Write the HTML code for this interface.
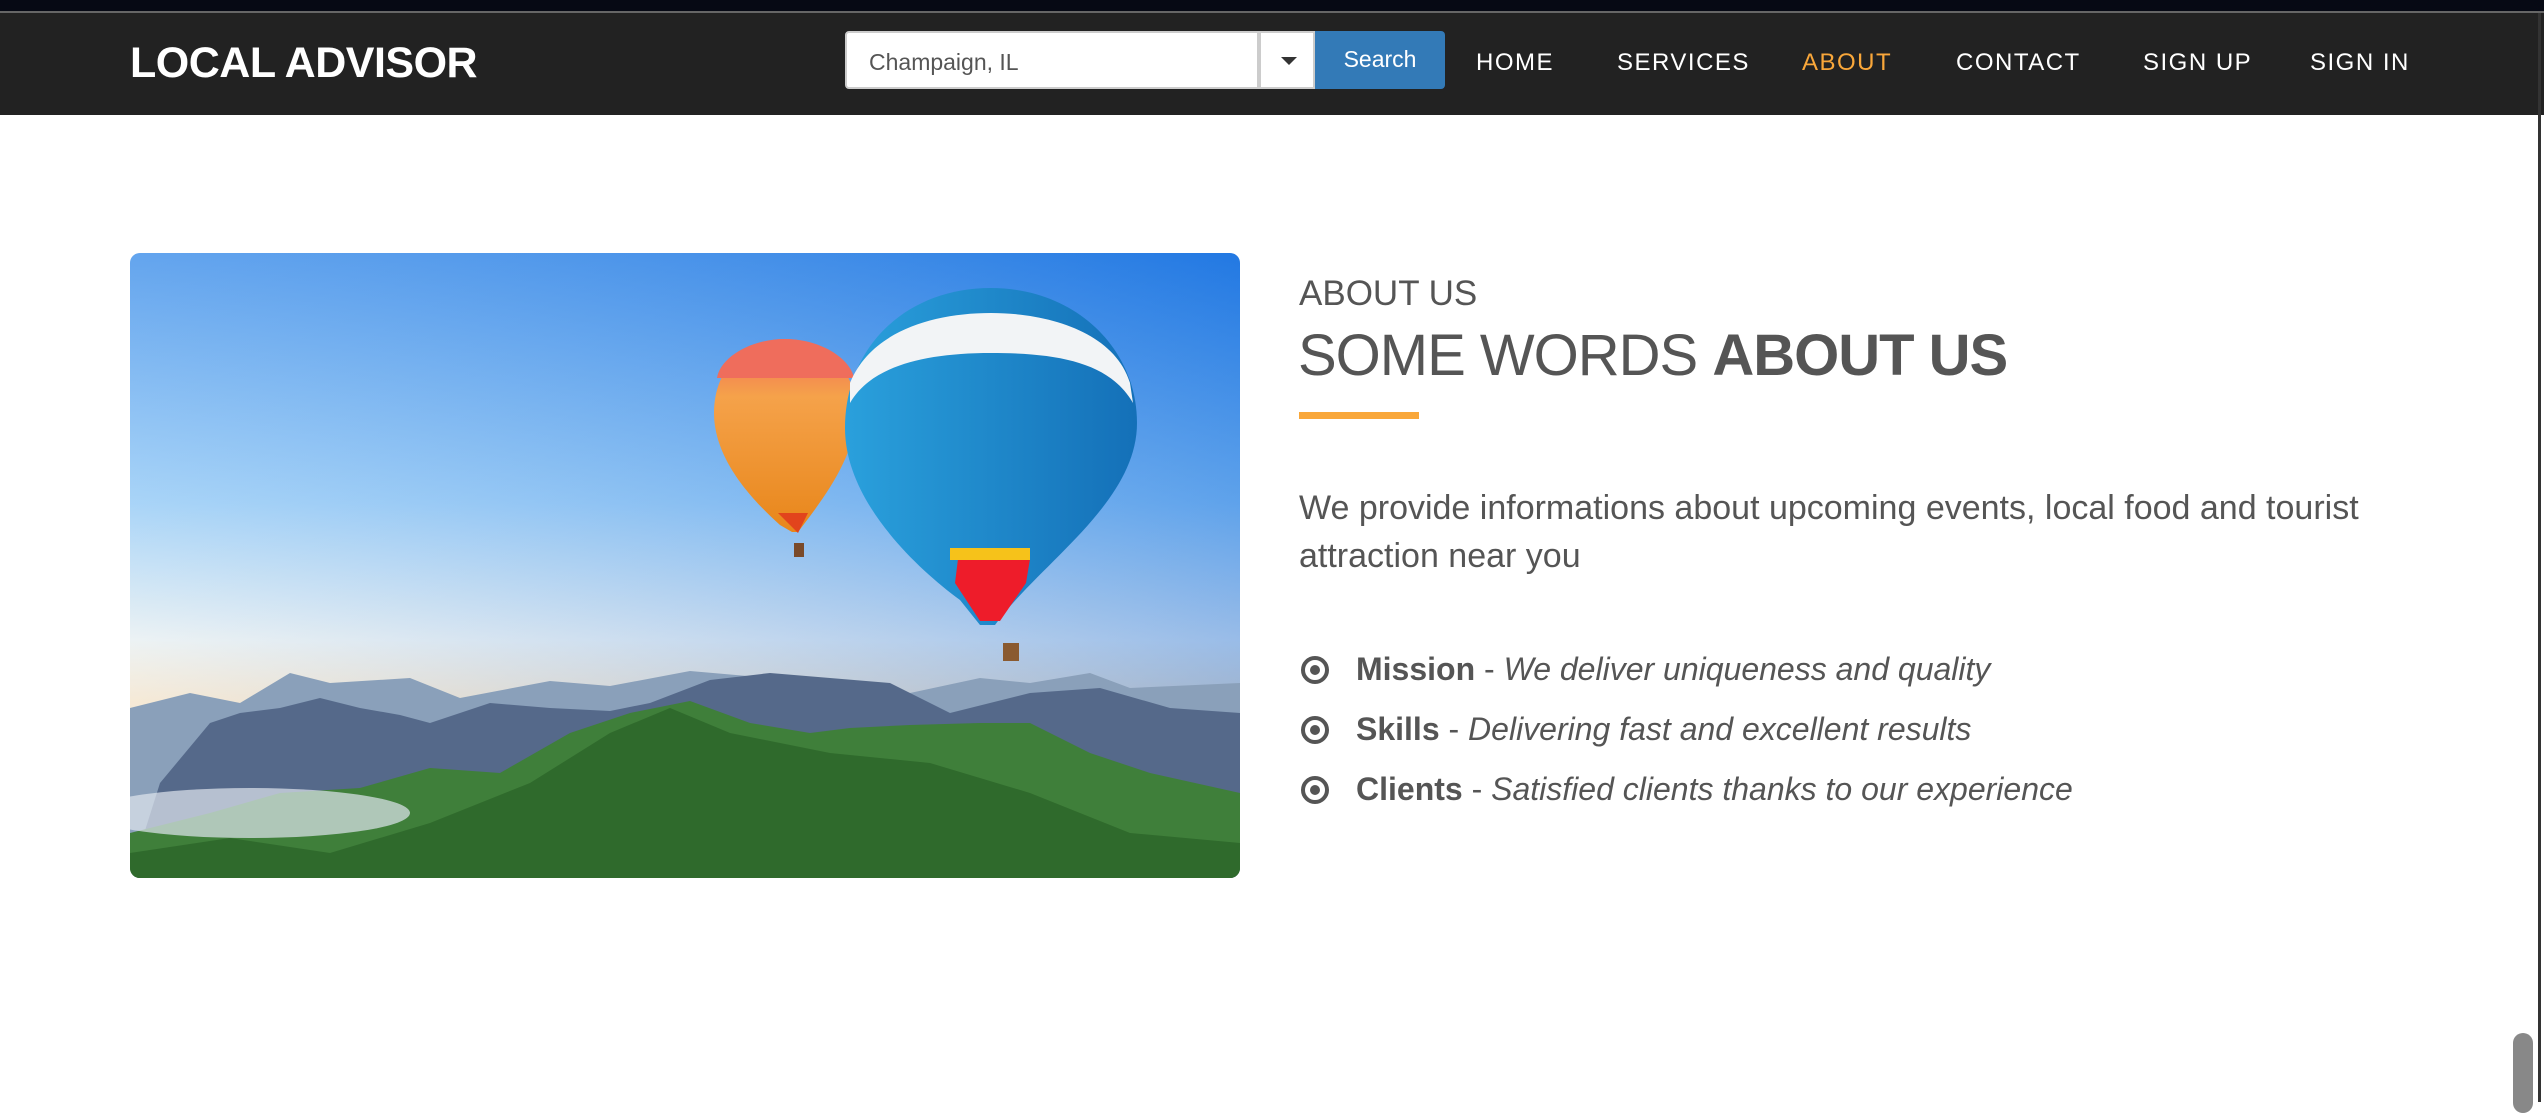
<!DOCTYPE html>
<html><head><meta charset="utf-8"><style>
*{margin:0;padding:0;box-sizing:border-box}
body{width:2544px;height:1102px;background:#fff;position:relative;overflow:hidden;font-family:"Liberation Sans",sans-serif}
.top{position:absolute;left:0;top:0;width:2544px;height:13px;background:#060914;border-bottom:2px solid #666}
.nav{position:absolute;left:0;top:13px;width:2544px;height:102px;background:#222}
.logo{position:absolute;left:130px;top:26px;color:#fff;font-weight:bold;font-size:43px;letter-spacing:-0.5px}
.inp{position:absolute;left:845px;top:18px;width:414px;height:58px;background:#fff;border:2px solid #ccc;border-radius:4px 0 0 4px;font-size:23px;color:#555;padding:16px 22px}
.dd{position:absolute;left:1259px;top:18px;width:56px;height:58px;background:#fff;border:2px solid #ccc}
.dd:after{content:"";position:absolute;left:20px;top:24px;border-left:8px solid transparent;border-right:8px solid transparent;border-top:8px solid #333}
.btn{position:absolute;left:1315px;top:18px;width:130px;height:58px;background:#337ab7;border-radius:0 4px 4px 0;color:#fff;font-size:23px;text-align:center;line-height:56px}
.nl{position:absolute;top:33px;color:#fff;font-size:24px;letter-spacing:1.5px;line-height:34px}
.img{position:absolute;left:130px;top:253px;width:1110px;height:625px;border-radius:10px;overflow:hidden}
.h1{position:absolute;left:1299px;top:274px;font-size:35px;color:#555}
.h2{position:absolute;left:1298px;top:322px;font-size:58px;color:#555;letter-spacing:-1px}
.h2 b{font-weight:bold}
.bar{position:absolute;left:1299px;top:412px;width:120px;height:7px;background:#f9a73a}
.p{position:absolute;left:1299px;top:484px;width:1085px;font-size:34px;line-height:48px;color:#555}
.li{position:absolute;left:1299px;font-size:32px;color:#555}
.li i{font-style:italic}
.ic{position:absolute;left:1301px;width:28px;height:28px;border:4px solid #555;border-radius:50%}
.ic:after{content:"";position:absolute;left:5px;top:5px;width:10px;height:10px;background:#555;border-radius:50%}
.sb{position:absolute;left:2513px;top:1033px;width:20px;height:80px;background:#888;border-radius:10px}
.edge{position:absolute;left:2538px;top:13px;width:3px;height:1089px;background:#333}
</style></head><body>
<div class="top"></div>
<div class="nav">
<div class="logo">LOCAL ADVISOR</div>
<div class="inp">Champaign, IL</div>
<div class="dd"></div>
<div class="btn">Search</div>
<div class="nl" style="left:1476px">HOME</div>
<div class="nl" style="left:1617px">SERVICES</div>
<div class="nl" style="left:1802px;color:#f9a73a">ABOUT</div>
<div class="nl" style="left:1956px">CONTACT</div>
<div class="nl" style="left:2143px">SIGN UP</div>
<div class="nl" style="left:2310px">SIGN IN</div>
</div>
<div class="img"><svg width="1110" height="625" viewBox="0 0 1110 625">
<defs>
<linearGradient id="sky" x1="0" y1="0" x2="0" y2="1"><stop offset="0" stop-color="#2f86e8"/><stop offset="0.4" stop-color="#8cc6f5"/><stop offset="0.62" stop-color="#e6eef0"/><stop offset="0.72" stop-color="#f3e2c8"/><stop offset="1" stop-color="#c9d6e2"/></linearGradient>
<linearGradient id="skyr" x1="0" y1="0" x2="1" y2="0"><stop offset="0" stop-color="#fff" stop-opacity="0.25"/><stop offset="1" stop-color="#0a5fd8" stop-opacity="0.35"/></linearGradient>
<linearGradient id="ob" x1="0" y1="0" x2="0" y2="1"><stop offset="0" stop-color="#f06a5a"/><stop offset="0.3" stop-color="#f5a24a"/><stop offset="1" stop-color="#e8861a"/></linearGradient>
<linearGradient id="bb" x1="0" y1="0" x2="1" y2="0"><stop offset="0" stop-color="#2aa0dc"/><stop offset="1" stop-color="#1470b8"/></linearGradient>
</defs>
<rect width="1110" height="625" fill="url(#sky)"/>
<rect width="1110" height="625" fill="url(#skyr)"/>
<path d="M0 455 L60 440 L110 450 L160 420 L200 430 L280 425 L330 445 L420 428 L480 433 L560 418 L640 425 L700 430 L780 440 L850 425 L900 430 L960 420 L1000 435 L1110 430 L1110 625 L0 625Z" fill="#8aa0ba"/>
<path d="M30 530 L80 470 L110 460 L150 455 L190 445 L230 455 L270 462 L300 470 L360 450 L420 455 L480 458 L520 450 L580 427 L640 420 L700 425 L760 430 L820 460 L900 440 L970 435 L1040 455 L1110 460 L1110 625 L0 625Z" fill="#55698a"/>
<path d="M0 580 L80 560 L150 540 L230 535 L300 515 L370 520 L440 480 L500 460 L560 448 L620 470 L680 480 L720 475 L780 472 L850 470 L900 470 L960 500 L1020 520 L1110 540 L1110 625 L0 625Z" fill="#3f7f3a"/>
<path d="M0 600 L100 585 L200 600 L300 570 L400 530 L480 480 L540 455 L600 480 L700 500 L800 510 L900 540 L1000 580 L1110 590 L1110 625 L0 625Z" fill="#2f6a2c"/>
<ellipse cx="120" cy="560" rx="160" ry="25" fill="#dfe6ee" opacity="0.7"/>
<path d="M655 86 C615 86 584 115 584 160 C584 205 620 245 650 272 L662 279 L668 279 C690 250 726 205 726 160 C726 115 695 86 655 86Z" fill="url(#ob)"/>
<path d="M655 86 C620 86 590 105 587 125 L724 125 C720 105 690 86 655 86Z" fill="#ef6d5c"/>
<path d="M648 260 L668 280 L678 260Z" fill="#e2441c"/>
<rect x="664" y="290" width="10" height="14" fill="#7a4a2a"/>
<path d="M861 35 C775 35 715 95 715 175 C715 245 780 310 830 347 L850 372 L865 372 C910 310 1007 250 1007 170 C1007 95 945 35 861 35Z" fill="url(#bb)"/>
<path d="M720 130 C740 80 800 60 861 60 C920 60 985 80 1000 130 L1003 150 C980 110 930 100 861 100 C790 100 740 115 720 150Z" fill="#f2f4f6"/>
<path d="M828 306 L900 306 L896 330 L870 368 L850 368 L825 330Z" fill="#ee1c2a"/>
<rect x="820" y="295" width="80" height="12" fill="#f6c21a"/>
<rect x="873" y="390" width="16" height="18" fill="#8a5a30"/>
</svg></div>
<div class="h1">ABOUT US</div>
<div class="h2">SOME WORDS <b>ABOUT US</b></div>
<div class="bar"></div>
<div class="p">We provide informations about upcoming events, local food and tourist attraction near you</div>
<div class="ic" style="top:656px"></div>
<div class="li" style="left:1356px;top:651px"><b>Mission</b> - <i>We deliver uniqueness and quality</i></div>
<div class="ic" style="top:716px"></div>
<div class="li" style="left:1356px;top:711px"><b>Skills</b> - <i>Delivering fast and excellent results</i></div>
<div class="ic" style="top:776px"></div>
<div class="li" style="left:1356px;top:771px"><b>Clients</b> - <i>Satisfied clients thanks to our experience</i></div>
<div class="edge"></div>
<div class="sb"></div>
</body></html>
